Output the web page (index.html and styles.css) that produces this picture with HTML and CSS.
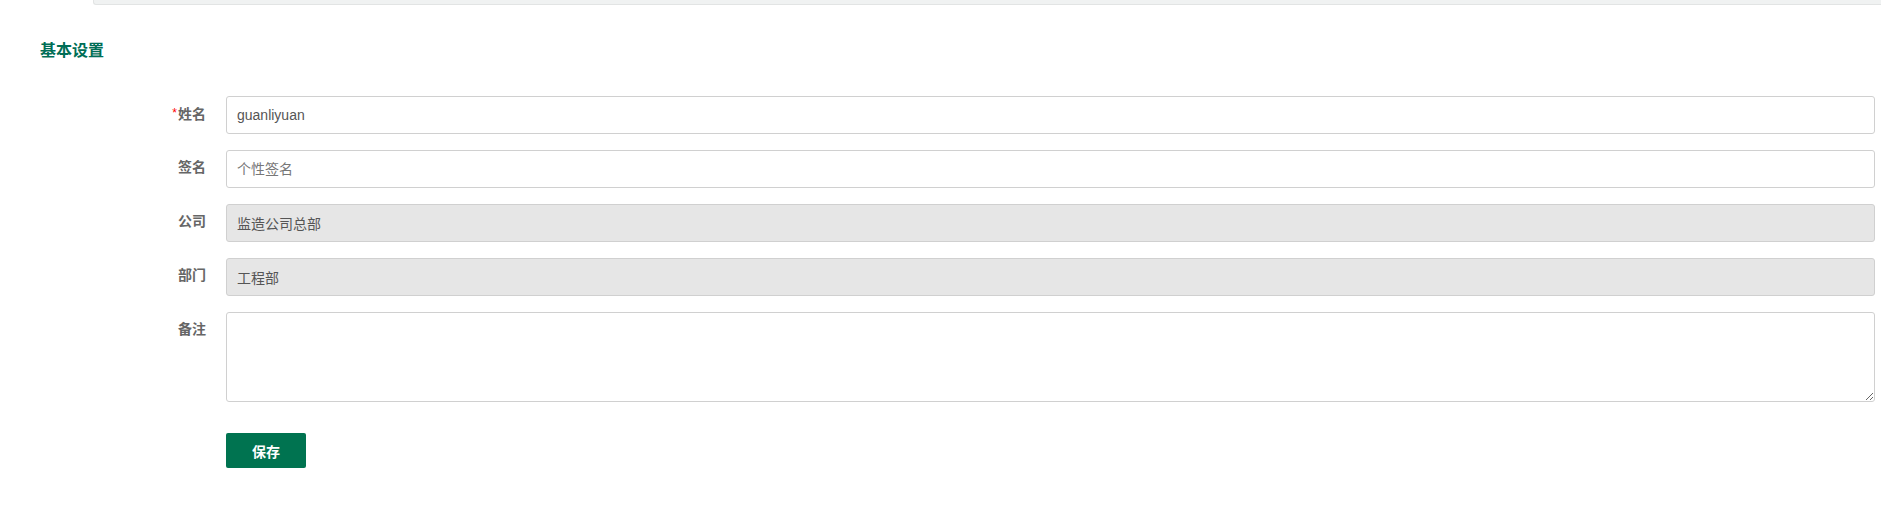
FILE: index.html
```html
<!DOCTYPE html>
<html lang="zh-CN">
  <head>
    <meta charset="UTF-8" />
    <title>基本设置</title>
    <link rel="stylesheet" href="styles.css">
  </head>
  <body>
    <div class="top-bar"></div>
    <div class="panel">
      <h2 class="panel-title">基本设置</h2>
      <form class="settings-form">
        <div class="form-row">
          <label class="form-label"><span class="required">*</span>姓名</label>
          <input type="text" class="form-input" value="guanliyuan" />
        </div>
        <div class="form-row">
          <label class="form-label">签名</label>
          <input type="text" class="form-input" placeholder="个性签名" />
        </div>
        <div class="form-row">
          <label class="form-label">公司</label>
          <input type="text" class="form-input" value="监造公司总部" disabled />
        </div>
        <div class="form-row">
          <label class="form-label">部门</label>
          <input type="text" class="form-input" value="工程部" disabled />
        </div>
        <div class="form-row">
          <label class="form-label">备注</label>
          <textarea class="form-textarea"></textarea>
        </div>
        <div class="form-row form-actions">
          <span></span>
          <button type="submit" class="save-btn">保存</button>
        </div>
      </form>
    </div>
  </body>
</html>
```

FILE: styles.css
```css
body {
  font-family: "Liberation Sans", "Noto Sans CJK SC", sans-serif;
  font-size: 14px;
  margin: 0;
  padding: 0;
  background: #fff;
  color: #555;
}

.top-bar {
  margin-left: 93px;
  height: 4px;
  background: #f0f2f2;
  border: 1px solid #e2e4e4;
  border-top: none;
  border-right: none;
  border-radius: 0 0 0 3px;
}

.panel {
  padding: 0 6px 0 40px;
}

.panel-title {
  margin: 36px 0 35px;
  font-size: 16px;
  line-height: 20px;
  font-weight: bold;
  color: #006e56;
}

.form-row {
  display: grid;
  grid-template-columns: 166px 1fr;
  column-gap: 20px;
  margin-bottom: 16px;
}

.form-label {
  text-align: right;
  padding-top: 7px;
  line-height: 20px;
  font-weight: bold;
  color: #666;
}

.required {
  color: #f00;
  font-size: 12px;
  font-weight: normal;
  margin-right: 1px;
  vertical-align: 2px;
}

.form-input,
.form-textarea {
  box-sizing: border-box;
  width: 100%;
  border: 1px solid #d0d0d0;
  border-radius: 3px;
  font-family: inherit;
  font-size: 14px;
  color: #555;
  outline: none;
  background: #fff;
}

.form-input {
  height: 38px;
  padding: 0 10px;
}

.form-input::placeholder {
  color: #777;
}

.form-input:disabled {
  background: #e6e6e6;
  color: #555;
}

.form-textarea {
  height: 90px;
  padding: 6px 10px;
  resize: vertical;
}

.form-actions {
  margin-top: 31px;
}

.save-btn {
  width: 80px;
  height: 35px;
  border: none;
  border-radius: 2px;
  background: #007350;
  color: #fff;
  font-family: inherit;
  font-size: 14px;
  font-weight: bold;
  cursor: pointer;
}
```
